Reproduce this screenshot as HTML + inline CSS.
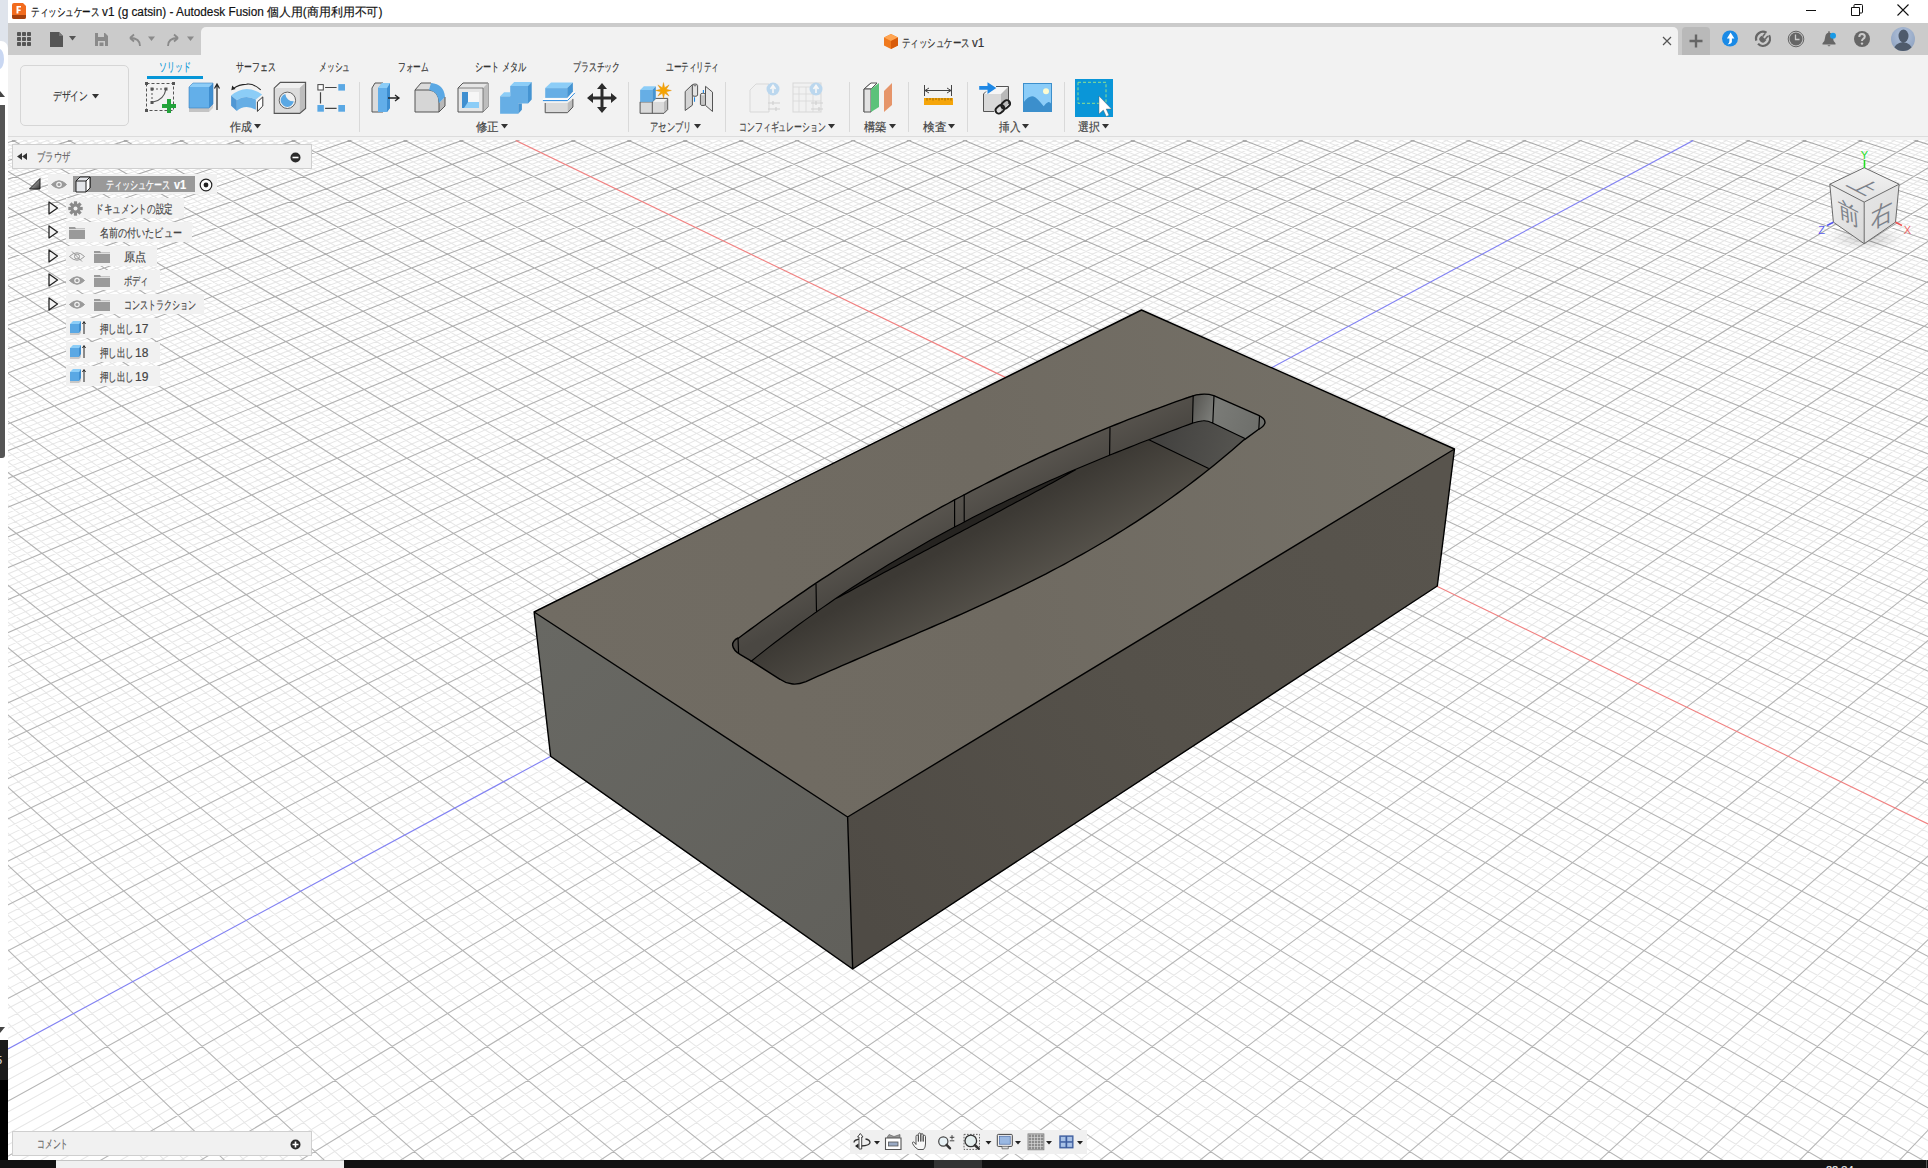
<!DOCTYPE html>
<html lang="ja">
<head>
<meta charset="utf-8">
<style>
*{margin:0;padding:0;box-sizing:border-box}
html,body{width:1928px;height:1168px;overflow:hidden;background:#fff;font-family:"Liberation Sans",sans-serif;color:#333}
.a{position:absolute}
svg{position:absolute;overflow:visible}
#title{left:8px;top:0;width:1920px;height:23px;background:#fff}
#tabbar{left:8px;top:23px;width:1920px;height:32px;background:#cbcbcb}
#ribbon{left:8px;top:55px;width:1920px;height:85px;background:#f2f2f2}
#view{left:8px;top:140px;width:1920px;height:1020px;background:#fff;overflow:hidden}
#strip{left:0;top:0;width:8px;height:1168px;background:#fff}
#task{left:0;top:1160px;width:1928px;height:8px;background:#111}
.t{position:absolute;white-space:nowrap;line-height:1;-webkit-text-stroke:0.18px currentColor}
</style>
</head>
<body>
<div id="view" class="a">
<svg width="1920" height="1020" style="left:0;top:0">
<defs><linearGradient id="gMaj" x1="0" y1="0" x2="0" y2="1020" gradientUnits="userSpaceOnUse"><stop offset="0" stop-color="#aaaaaa"/><stop offset="0.3" stop-color="#b2b2b2"/><stop offset="1" stop-color="#b6b6b6"/></linearGradient></defs><path d="M3.0 -2.0L-2.0 -0.4M25.4 -2.0L-2.0 6.7M36.5 -2.0L-2.0 10.3M47.7 -2.0L-2.0 13.9M58.9 -2.0L-2.0 17.5M81.2 -2.0L-2.0 24.9M92.4 -2.0L-2.0 28.6M103.5 -2.0L-2.0 32.3M114.7 -2.0L-2.0 36.0M137.0 -2.0L-2.0 43.5M148.2 -2.0L-2.0 47.3M159.4 -2.0L-2.0 51.1M170.5 -2.0L-2.0 55.0M192.9 -2.0L-2.0 62.7M204.0 -2.0L-2.0 66.6M215.2 -2.0L-2.0 70.6M226.4 -2.0L-2.0 74.5M248.7 -2.0L-2.0 82.5M259.9 -2.0L-2.0 86.5M271.0 -2.0L-2.0 90.6M282.2 -2.0L-2.0 94.6M1911.3 -2.0L1922.0 1.4M304.5 -2.0L-2.0 102.8M1889.0 -2.0L1922.0 8.5M315.7 -2.0L-2.0 107.0M1877.8 -2.0L1922.0 12.1M326.9 -2.0L-2.0 111.1M1866.6 -2.0L1922.0 15.8M338.0 -2.0L-2.0 115.3M1855.4 -2.0L1922.0 19.4M360.4 -2.0L-2.0 123.8M1833.1 -2.0L1922.0 26.8M371.5 -2.0L-2.0 128.0M1821.9 -2.0L1922.0 30.5M382.7 -2.0L-2.0 132.3M1810.7 -2.0L1922.0 34.2M393.9 -2.0L-2.0 136.6M1799.6 -2.0L1922.0 37.9M416.2 -2.0L-2.0 145.4M1777.2 -2.0L1922.0 45.5M427.4 -2.0L-2.0 149.8M1766.1 -2.0L1922.0 49.3M438.5 -2.0L-2.0 154.2M1754.9 -2.0L1922.0 53.1M449.7 -2.0L-2.0 158.6M1743.7 -2.0L1922.0 57.0M472.0 -2.0L-2.0 167.6M1721.4 -2.0L1922.0 64.8M483.2 -2.0L-2.0 172.1M1710.2 -2.0L1922.0 68.7M494.4 -2.0L-2.0 176.7M1699.0 -2.0L1922.0 72.6M505.5 -2.0L-2.0 181.3M1687.8 -2.0L1922.0 76.6M527.9 -2.0L-2.0 190.6M1665.5 -2.0L1922.0 84.6M539.1 -2.0L-2.0 195.2M1654.3 -2.0L1922.0 88.6M550.2 -2.0L-2.0 199.9M1643.2 -2.0L1922.0 92.7M561.4 -2.0L-2.0 204.7M1632.0 -2.0L1922.0 96.8M583.7 -2.0L-2.0 214.2M1609.6 -2.0L1922.0 105.0M594.9 -2.0L-2.0 219.1M1598.5 -2.0L1922.0 109.2M606.1 -2.0L-2.0 223.9M1587.3 -2.0L1922.0 113.4M617.2 -2.0L-2.0 228.8M1576.1 -2.0L1922.0 117.6M639.6 -2.0L-2.0 238.7M1553.8 -2.0L1922.0 126.0M650.7 -2.0L-2.0 243.7M1542.6 -2.0L1922.0 130.3M661.9 -2.0L-2.0 248.7M1531.4 -2.0L1922.0 134.6M673.1 -2.0L-2.0 253.7M1520.3 -2.0L1922.0 139.0M695.4 -2.0L-2.0 263.9M1497.9 -2.0L1922.0 147.7M706.6 -2.0L-2.0 269.1M1486.8 -2.0L1922.0 152.1M717.7 -2.0L-2.0 274.3M1475.6 -2.0L1922.0 156.6M728.9 -2.0L-2.0 279.5M1464.4 -2.0L1922.0 161.0M751.2 -2.0L-2.0 290.0M1442.1 -2.0L1922.0 170.1M762.4 -2.0L-2.0 295.3M1430.9 -2.0L1922.0 174.6M773.6 -2.0L-2.0 300.7M1419.7 -2.0L1922.0 179.2M784.8 -2.0L-2.0 306.1M1408.6 -2.0L1922.0 183.8M807.1 -2.0L-2.0 317.0M1386.2 -2.0L1922.0 193.1M818.3 -2.0L-2.0 322.5M1375.0 -2.0L1922.0 197.8M829.4 -2.0L-2.0 328.0M1363.9 -2.0L1922.0 202.5M840.6 -2.0L-2.0 333.6M1352.7 -2.0L1922.0 207.3M862.9 -2.0L-2.0 344.9M1330.4 -2.0L1922.0 216.9M874.1 -2.0L-2.0 350.6M1319.2 -2.0L1922.0 221.7M885.3 -2.0L-2.0 356.3M1308.0 -2.0L1922.0 226.6M896.4 -2.0L-2.0 362.1M1296.8 -2.0L1922.0 231.5M918.8 -2.0L-2.0 373.8M1274.5 -2.0L1922.0 241.4M929.9 -2.0L-2.0 379.7M1263.3 -2.0L1922.0 246.4M941.1 -2.0L-2.0 385.6M1252.2 -2.0L1922.0 251.5M952.3 -2.0L-2.0 391.6M1241.0 -2.0L1922.0 256.5M974.6 -2.0L-2.0 403.7M1218.6 -2.0L1922.0 266.8M985.8 -2.0L-2.0 409.8M1207.5 -2.0L1922.0 272.0M997.0 -2.0L-2.0 416.0M1196.3 -2.0L1922.0 277.2M1008.1 -2.0L-2.0 422.2M1185.1 -2.0L1922.0 282.4M1030.5 -2.0L-2.0 434.7M1162.8 -2.0L1922.0 293.0M1041.6 -2.0L-2.0 441.1M1151.6 -2.0L1922.0 298.3M1052.8 -2.0L-2.0 447.5M1140.5 -2.0L1922.0 303.7M1064.0 -2.0L-2.0 453.9M1129.3 -2.0L1922.0 309.1M1086.3 -2.0L-2.0 466.9M1106.9 -2.0L1922.0 320.1M1097.5 -2.0L-2.0 473.5M1095.8 -2.0L1922.0 325.6M1108.7 -2.0L-2.0 480.1M1084.6 -2.0L1922.0 331.2M1119.8 -2.0L-2.0 486.8M1073.4 -2.0L1922.0 336.8M1142.2 -2.0L-2.0 500.3M1051.1 -2.0L1922.0 348.1M1153.3 -2.0L-2.0 507.1M1039.9 -2.0L1922.0 353.9M1164.5 -2.0L-2.0 514.0M1028.7 -2.0L1922.0 359.6M1175.7 -2.0L-2.0 521.0M1017.6 -2.0L1922.0 365.4M1198.0 -2.0L-2.0 535.0M995.2 -2.0L1922.0 377.2M1209.2 -2.0L-2.0 542.1M984.1 -2.0L1922.0 383.1M1220.4 -2.0L-2.0 549.2M972.9 -2.0L1922.0 389.1M1231.5 -2.0L-2.0 556.4M961.7 -2.0L1922.0 395.1M1253.9 -2.0L-2.0 571.0M939.4 -2.0L1922.0 407.2M1265.0 -2.0L-2.0 578.4M928.2 -2.0L1922.0 413.4M1276.2 -2.0L-2.0 585.8M917.0 -2.0L1922.0 419.6M1287.4 -2.0L-2.0 593.3M905.9 -2.0L1922.0 425.8M1309.7 -2.0L-2.0 608.5M883.5 -2.0L1922.0 438.4M1320.9 -2.0L-2.0 616.2M872.4 -2.0L1922.0 444.8M1332.1 -2.0L-2.0 623.9M861.2 -2.0L1922.0 451.2M1343.2 -2.0L-2.0 631.7M850.0 -2.0L1922.0 457.7M1365.6 -2.0L-2.0 647.5M827.7 -2.0L1922.0 470.7M1376.7 -2.0L-2.0 655.5M816.5 -2.0L1922.0 477.4M1387.9 -2.0L-2.0 663.6M805.4 -2.0L1922.0 484.0M1399.1 -2.0L-2.0 671.7M794.2 -2.0L1922.0 490.7M1421.4 -2.0L-2.0 688.2M771.8 -2.0L1922.0 504.3M1432.6 -2.0L-2.0 696.5M760.7 -2.0L1922.0 511.2M1443.8 -2.0L-2.0 704.9M749.5 -2.0L1922.0 518.1M1454.9 -2.0L-2.0 713.4M738.3 -2.0L1922.0 525.1M1477.3 -2.0L-2.0 730.6M716.0 -2.0L1922.0 539.2M1488.5 -2.0L-2.0 739.3M704.8 -2.0L1922.0 546.3M1499.6 -2.0L-2.0 748.1M693.7 -2.0L1922.0 553.5M1510.8 -2.0L-2.0 756.9M682.5 -2.0L1922.0 560.7M1533.1 -2.0L-2.0 774.8M660.2 -2.0L1922.0 575.4M1544.3 -2.0L-2.0 783.9M649.0 -2.0L1922.0 582.8M1555.5 -2.0L-2.0 793.1M637.8 -2.0L1922.0 590.3M1566.7 -2.0L-2.0 802.3M626.6 -2.0L1922.0 597.8M1589.0 -2.0L-2.0 821.1M604.3 -2.0L1922.0 613.1M1600.2 -2.0L-2.0 830.6M593.1 -2.0L1922.0 620.8M1611.3 -2.0L-2.0 840.1M582.0 -2.0L1922.0 628.6M1622.5 -2.0L-2.0 849.8M570.8 -2.0L1922.0 636.4M1644.8 -2.0L-2.0 869.4M548.5 -2.0L1922.0 652.3M1656.0 -2.0L-2.0 879.3M537.3 -2.0L1922.0 660.4M1667.2 -2.0L-2.0 889.3M526.1 -2.0L1922.0 668.5M1678.4 -2.0L-2.0 899.5M515.0 -2.0L1922.0 676.7M1700.7 -2.0L-2.0 920.0M492.6 -2.0L1922.0 693.2M1711.9 -2.0L-2.0 930.4M481.5 -2.0L1922.0 701.6M1723.1 -2.0L-2.0 940.9M470.3 -2.0L1922.0 710.1M1734.2 -2.0L-2.0 951.5M459.1 -2.0L1922.0 718.6M1756.6 -2.0L-2.0 973.0M436.8 -2.0L1922.0 735.9M1767.7 -2.0L-2.0 983.9M425.6 -2.0L1922.0 744.6M1778.9 -2.0L-2.0 994.9M414.4 -2.0L1922.0 753.4M1790.1 -2.0L-2.0 1006.0M403.3 -2.0L1922.0 762.3M1812.4 -2.0L9.6 1022.0M380.9 -2.0L1922.0 780.4M1823.6 -2.0L29.6 1022.0M369.8 -2.0L1922.0 789.5M1834.8 -2.0L49.6 1022.0M358.6 -2.0L1922.0 798.7M1845.9 -2.0L69.6 1022.0M347.4 -2.0L1922.0 808.0M1868.3 -2.0L109.6 1022.0M325.1 -2.0L1922.0 826.9M1879.5 -2.0L129.6 1022.0M313.9 -2.0L1922.0 836.4M1890.6 -2.0L149.6 1022.0M302.8 -2.0L1922.0 846.0M1901.8 -2.0L169.6 1022.0M291.6 -2.0L1922.0 855.8M1922.0 -0.7L209.6 1022.0M269.3 -2.0L1922.0 875.5M1922.0 6.0L229.6 1022.0M258.1 -2.0L1922.0 885.5M1922.0 12.8L249.6 1022.0M246.9 -2.0L1922.0 895.6M1922.0 19.6L269.6 1022.0M235.8 -2.0L1922.0 905.7M1922.0 33.6L309.6 1022.0M213.4 -2.0L1922.0 926.4M1922.0 40.6L329.6 1022.0M202.3 -2.0L1922.0 936.9M1922.0 47.8L349.6 1022.0M191.1 -2.0L1922.0 947.4M1922.0 55.0L369.6 1022.0M179.9 -2.0L1922.0 958.1M1922.0 69.7L409.6 1022.0M157.6 -2.0L1922.0 979.7M1922.0 77.2L429.6 1022.0M146.4 -2.0L1922.0 990.7M1922.0 84.7L449.6 1022.0M135.3 -2.0L1922.0 1001.8M1922.0 92.3L469.6 1022.0M124.1 -2.0L1922.0 1013.0M1922.0 107.9L509.6 1022.0M101.8 -2.0L1898.0 1022.0M1922.0 115.7L529.6 1022.0M90.6 -2.0L1878.0 1022.0M1922.0 123.7L549.6 1022.0M79.4 -2.0L1858.0 1022.0M1922.0 131.8L569.6 1022.0M68.2 -2.0L1838.0 1022.0M1922.0 148.2L609.6 1022.0M45.9 -2.0L1798.0 1022.0M1922.0 156.6L629.6 1022.0M34.7 -2.0L1778.0 1022.0M1922.0 165.0L649.6 1022.0M23.6 -2.0L1758.0 1022.0M1922.0 173.5L669.6 1022.0M12.4 -2.0L1738.0 1022.0M1922.0 190.9L709.6 1022.0M-2.0 2.7L1698.0 1022.0M1922.0 199.8L729.6 1022.0M-2.0 9.5L1678.0 1022.0M1922.0 208.7L749.6 1022.0M-2.0 16.3L1658.0 1022.0M1922.0 217.8L769.6 1022.0M-2.0 23.2L1638.0 1022.0M1922.0 236.3L809.6 1022.0M-2.0 37.2L1598.0 1022.0M1922.0 245.7L829.6 1022.0M-2.0 44.4L1578.0 1022.0M1922.0 255.2L849.6 1022.0M-2.0 51.6L1558.0 1022.0M1922.0 264.8L869.6 1022.0M-2.0 58.8L1538.0 1022.0M1922.0 284.5L909.6 1022.0M-2.0 73.6L1498.0 1022.0M1922.0 294.5L929.6 1022.0M-2.0 81.1L1478.0 1022.0M1922.0 304.6L949.6 1022.0M-2.0 88.7L1458.0 1022.0M1922.0 314.9L969.6 1022.0M-2.0 96.4L1438.0 1022.0M1922.0 335.8L1009.6 1022.0M-2.0 112.0L1398.0 1022.0M1922.0 346.4L1029.6 1022.0M-2.0 120.0L1378.0 1022.0M1922.0 357.2L1049.6 1022.0M-2.0 128.0L1358.0 1022.0M1922.0 368.2L1069.6 1022.0M-2.0 136.1L1338.0 1022.0M1922.0 390.5L1109.7 1022.0M-2.0 152.6L1298.0 1022.0M1922.0 401.9L1129.7 1022.0M-2.0 161.0L1278.0 1022.0M1922.0 413.5L1149.7 1022.0M-2.0 169.6L1258.0 1022.0M1922.0 425.2L1169.7 1022.0M-2.0 178.2L1238.0 1022.0M1922.0 449.1L1209.7 1022.0M-2.0 195.7L1198.0 1022.0M1922.0 461.3L1229.7 1022.0M-2.0 204.6L1178.0 1022.0M1922.0 473.6L1249.7 1022.0M-2.0 213.6L1158.0 1022.0M1922.0 486.2L1269.7 1022.0M-2.0 222.7L1138.0 1022.0M1922.0 511.8L1309.7 1022.0M-2.0 241.3L1098.0 1022.0M1922.0 524.9L1329.7 1022.0M-2.0 250.8L1078.0 1022.0M1922.0 538.2L1349.7 1022.0M-2.0 260.4L1058.1 1022.0M1922.0 551.7L1369.7 1022.0M-2.0 270.1L1038.1 1022.0M1922.0 579.3L1409.7 1022.0M-2.0 289.9L998.1 1022.0M1922.0 593.4L1429.7 1022.0M-2.0 300.0L978.1 1022.0M1922.0 607.7L1449.7 1022.0M-2.0 310.2L958.1 1022.0M1922.0 622.2L1469.7 1022.0M-2.0 320.5L938.1 1022.0M1922.0 651.9L1509.7 1022.0M-2.0 341.6L898.1 1022.0M1922.0 667.1L1529.7 1022.0M-2.0 352.4L878.1 1022.0M1922.0 682.6L1549.7 1022.0M-2.0 363.3L858.1 1022.0M1922.0 698.3L1569.7 1022.0M-2.0 374.3L838.1 1022.0M1922.0 730.4L1609.8 1022.0M-2.0 396.8L798.1 1022.0M1922.0 746.9L1629.8 1022.0M-2.0 408.3L778.1 1022.0M1922.0 763.6L1649.8 1022.0M-2.0 419.9L758.1 1022.0M1922.0 780.6L1669.8 1022.0M-2.0 431.8L738.1 1022.0M1922.0 815.5L1709.8 1022.0M-2.0 455.9L698.1 1022.0M1922.0 833.4L1729.8 1022.0M-2.0 468.2L678.1 1022.0M1922.0 851.6L1749.8 1022.0M-2.0 480.6L658.1 1022.0M1922.0 870.1L1769.8 1022.0M-2.0 493.3L638.1 1022.0M1922.0 908.1L1809.8 1022.0M-2.0 519.2L598.2 1022.0M1922.0 927.6L1829.8 1022.0M-2.0 532.4L578.2 1022.0M1922.0 947.4L1849.8 1022.0M-2.0 545.8L558.2 1022.0M1922.0 967.6L1869.8 1022.0M-2.0 559.4L538.2 1022.0M1922.0 1009.1L1909.8 1022.0M-2.0 587.2L498.2 1022.0M-2.0 601.5L478.2 1022.0M-2.0 615.9L458.2 1022.0M-2.0 630.6L438.2 1022.0M-2.0 660.6L398.2 1022.0M-2.0 675.9L378.2 1022.0M-2.0 691.5L358.2 1022.0M-2.0 707.4L338.2 1022.0M-2.0 739.9L298.2 1022.0M-2.0 756.5L278.2 1022.0M-2.0 773.4L258.2 1022.0M-2.0 790.6L238.3 1022.0M-2.0 825.9L198.3 1022.0M-2.0 843.9L178.3 1022.0M-2.0 862.3L158.3 1022.0M-2.0 881.0L138.3 1022.0" stroke="#e7e7e7" stroke-width="1.05" fill="none"/><path d="M14.2 -2.0L-2.0 3.1M70.0 -2.0L-2.0 21.2M125.9 -2.0L-2.0 39.8M181.7 -2.0L-2.0 58.8M237.5 -2.0L-2.0 78.5M293.4 -2.0L-2.0 98.7M1900.1 -2.0L1922.0 5.0M349.2 -2.0L-2.0 119.5M1844.3 -2.0L1922.0 23.1M405.0 -2.0L-2.0 141.0M1788.4 -2.0L1922.0 41.7M460.9 -2.0L-2.0 163.1M1732.5 -2.0L1922.0 60.9M516.7 -2.0L-2.0 185.9M1676.7 -2.0L1922.0 80.6M572.6 -2.0L-2.0 209.4M1620.8 -2.0L1922.0 100.9M628.4 -2.0L-2.0 233.7M1565.0 -2.0L1922.0 121.8M684.2 -2.0L-2.0 258.8M1509.1 -2.0L1922.0 143.3M740.1 -2.0L-2.0 284.7M1453.2 -2.0L1922.0 165.5M795.9 -2.0L-2.0 311.5M1397.4 -2.0L1922.0 188.4M851.8 -2.0L-2.0 339.2M1341.5 -2.0L1922.0 212.1M907.6 -2.0L-2.0 367.9M1285.7 -2.0L1922.0 236.5M963.5 -2.0L-2.0 397.7M1229.8 -2.0L1922.0 261.7M1019.3 -2.0L-2.0 428.5M1174.0 -2.0L1922.0 287.7M1075.2 -2.0L-2.0 460.4M1118.1 -2.0L1922.0 314.6M1131.0 -2.0L-2.0 493.5M1062.3 -2.0L1922.0 342.5M1186.8 -2.0L-2.0 527.9M1006.4 -2.0L1922.0 371.3M1242.7 -2.0L-2.0 563.7M950.6 -2.0L1922.0 401.1M1298.6 -2.0L-2.0 600.9M894.7 -2.0L1922.0 432.1M1354.4 -2.0L-2.0 639.6M838.9 -2.0L1922.0 464.2M1410.3 -2.0L-2.0 679.9M783.0 -2.0L1922.0 497.5M1466.1 -2.0L-2.0 722.0M727.2 -2.0L1922.0 532.1M1522.0 -2.0L-2.0 765.8M671.3 -2.0L1922.0 568.0M1577.8 -2.0L-2.0 811.7M615.5 -2.0L1922.0 605.4M1633.7 -2.0L-2.0 859.5M559.6 -2.0L1922.0 644.4M1745.4 -2.0L-2.0 962.2M447.9 -2.0L1922.0 727.2M1801.3 -2.0L-2.0 1017.2M392.1 -2.0L1922.0 771.3M1857.1 -2.0L89.6 1022.0M336.3 -2.0L1922.0 817.4M1913.0 -2.0L189.6 1022.0M280.4 -2.0L1922.0 865.6M1922.0 26.6L289.6 1022.0M224.6 -2.0L1922.0 916.0M1922.0 62.3L389.6 1022.0M168.8 -2.0L1922.0 968.9M1922.0 100.1L489.6 1022.0M112.9 -2.0L1918.0 1022.0M1922.0 140.0L589.6 1022.0M57.1 -2.0L1818.0 1022.0M1922.0 182.2L689.6 1022.0M1.2 -2.0L1718.0 1022.0M1922.0 227.0L789.6 1022.0M-2.0 30.2L1618.0 1022.0M1922.0 274.6L889.6 1022.0M-2.0 66.2L1518.0 1022.0M1922.0 325.2L989.6 1022.0M-2.0 104.2L1418.0 1022.0M1922.0 379.3L1089.7 1022.0M-2.0 144.3L1318.0 1022.0M1922.0 437.0L1189.7 1022.0M-2.0 186.9L1218.0 1022.0M1922.0 498.9L1289.7 1022.0M-2.0 232.0L1118.0 1022.0M1922.0 565.4L1389.7 1022.0M-2.0 279.9L1018.1 1022.0M1922.0 636.9L1489.7 1022.0M-2.0 331.0L918.1 1022.0M1922.0 714.2L1589.8 1022.0M-2.0 385.5L818.1 1022.0M1922.0 797.9L1689.8 1022.0M-2.0 443.7L718.1 1022.0M1922.0 888.9L1789.8 1022.0M-2.0 506.1L618.1 1022.0M1922.0 988.1L1889.8 1022.0M-2.0 573.2L518.2 1022.0M-2.0 645.5L418.2 1022.0M-2.0 723.5L318.2 1022.0M-2.0 808.1L218.3 1022.0" stroke="url(#gMaj)" stroke-width="1.1" fill="none"/>
<g transform="translate(-8,-140)">
<path d="M515.7 140.4L1928 823.9" stroke="#f08282" stroke-width="1.15" fill="none"/>
<path d="M1693.2 140.4L8 1048.9" stroke="#8282f2" stroke-width="1.15" fill="none"/>
<defs>
<linearGradient id="gTop" x1="534" y1="612" x2="1455" y2="449" gradientUnits="userSpaceOnUse"><stop offset="0" stop-color="#716c63"/><stop offset="0.5" stop-color="#6f6a61"/><stop offset="1" stop-color="#757168"/></linearGradient>
<linearGradient id="gLeft" x1="540" y1="620" x2="850" y2="960" gradientUnits="userSpaceOnUse"><stop offset="0" stop-color="#686863"/><stop offset="1" stop-color="#61605b"/></linearGradient>
<linearGradient id="gRight" x1="850" y1="900" x2="1450" y2="520" gradientUnits="userSpaceOnUse"><stop offset="0" stop-color="#4f4b45"/><stop offset="0.5" stop-color="#55514a"/><stop offset="1" stop-color="#58544d"/></linearGradient>
<linearGradient id="gFloor" x1="960" y1="540" x2="1010" y2="630" gradientUnits="userSpaceOnUse"><stop offset="0" stop-color="#3c3934"/><stop offset="1" stop-color="#5f5b53"/></linearGradient>
<linearGradient id="gWall" x1="900" y1="520" x2="920" y2="560" gradientUnits="userSpaceOnUse"><stop offset="0" stop-color="#5a5650"/><stop offset="1" stop-color="#4a4742"/></linearGradient>
<linearGradient id="gFlat" x1="1160" y1="440" x2="1230" y2="460" gradientUnits="userSpaceOnUse"><stop offset="0" stop-color="#434240"/><stop offset="1" stop-color="#54534f"/></linearGradient>
<linearGradient id="gEnd" x1="1193" y1="400" x2="1265" y2="430" gradientUnits="userSpaceOnUse"><stop offset="0" stop-color="#585753"/><stop offset="0.3" stop-color="#7a7b77"/><stop offset="1" stop-color="#6c6d69"/></linearGradient>
</defs>
<path d="M1141.5 310L1454.5 449L847.6 817L534.1 612Z" fill="url(#gTop)"/>
<path d="M534.1 612L847.6 817L852.7 969L550.6 756.2Z" fill="url(#gLeft)"/>
<path d="M847.6 817L1454.5 449L1437.3 586L852.7 969Z" fill="url(#gRight)"/>
<path d="M1141.5 310L1454.5 449L1437.3 586L852.7 969L550.6 756.2L534.1 612Z M534.1 612L847.6 817L1454.5 449 M847.6 817L852.7 969" stroke="#000" stroke-width="1.4" fill="none" stroke-linejoin="round"/>
<path d="M738.0 638.5L744.0 634.0L750.0 629.6L756.0 625.2L762.0 620.8L768.0 616.5L774.0 612.2L780.0 607.9L786.0 603.7L792.0 599.6L798.0 595.4L804.0 591.3L810.0 587.2L816.0 583.2L822.0 579.2L828.0 575.3L834.0 571.3L840.0 567.5L846.0 563.6L852.0 559.8L858.0 556.0L864.0 552.3L870.0 548.6L876.0 544.9L882.0 541.3L888.0 537.6L894.0 534.1L900.0 530.5L906.0 527.0L912.0 523.6L918.0 520.1L924.0 516.7L930.0 513.4L936.0 510.0L942.0 506.7L948.0 503.5L954.0 500.2L960.0 497.0L966.0 493.9L972.0 490.7L978.0 487.6L984.0 484.5L990.0 481.5L996.0 478.5L1002.0 475.5L1008.0 472.5L1014.0 469.6L1020.0 466.7L1026.0 463.9L1032.0 461.0L1038.0 458.2L1044.0 455.5L1050.0 452.7L1056.0 450.0L1062.0 447.3L1068.0 444.7L1074.0 442.1L1080.0 439.5L1086.0 436.9L1092.0 434.4L1098.0 431.9L1104.0 429.4L1110.0 426.9L1116.0 424.5L1122.0 422.1L1128.0 419.7L1134.0 417.4L1140.0 415.1L1146.0 412.8L1152.0 410.5L1158.0 408.3L1164.0 406.1L1170.0 403.9L1176.0 401.7L1182.0 399.6L1188.0 397.5C1199 393.2 1206 393.2 1213.8 395.6L1258.7 415.4C1262 417 1265.5 419.5 1264.9 423.1C1264 426 1261 428 1258.7 429.3L1244.9 439.4L1244.0 439.8L1238.0 445.1L1232.0 450.3L1226.0 455.3L1220.0 460.3L1214.0 465.2L1208.0 470.0L1202.0 474.8L1196.0 479.4L1190.0 484.0L1184.0 488.5L1178.0 492.9L1172.0 497.3L1166.0 501.5L1160.0 505.7L1154.0 509.8L1148.0 513.9L1142.0 517.9L1136.0 521.8L1130.0 525.7L1124.0 529.5L1118.0 533.2L1112.0 536.9L1106.0 540.5L1100.0 544.0L1094.0 547.5L1088.0 551.0L1082.0 554.4L1076.0 557.7L1070.0 561.0L1064.0 564.3L1058.0 567.5L1052.0 570.6L1046.0 573.8L1040.0 576.8L1034.0 579.9L1028.0 582.9L1022.0 585.8L1016.0 588.8L1010.0 591.7L1004.0 594.5L998.0 597.4L992.0 600.2L986.0 602.9L980.0 605.7L974.0 608.4L968.0 611.1L962.0 613.8L956.0 616.5L950.0 619.1L944.0 621.8L938.0 624.4L932.0 627.0L926.0 629.6L920.0 632.2L914.0 634.8L908.0 637.3L902.0 639.9L896.0 642.5L890.0 645.0L884.0 647.6L878.0 650.2L872.0 652.7L866.0 655.3L860.0 657.9L854.0 660.5L848.0 663.1L842.0 665.7L836.0 668.3L830.0 670.9L824.0 673.6L818.0 676.2L812.0 678.9L806.0 681.6C801 683.5 795 684.5 791.4 683.8C786 683 783 681.5 780 679.3L750.6 660.7L740.4 654.7C736 652 733 649 732.6 645.1C732.6 641.5 735 639.5 738 638Z" fill="url(#gFloor)"/>
<path d="M738.0 638.5L744.0 634.0L750.0 629.6L756.0 625.2L762.0 620.8L768.0 616.5L774.0 612.2L780.0 607.9L786.0 603.7L792.0 599.6L798.0 595.4L804.0 591.3L810.0 587.2L816.0 583.2L822.0 579.2L828.0 575.3L834.0 571.3L840.0 567.5L846.0 563.6L852.0 559.8L858.0 556.0L864.0 552.3L870.0 548.6L876.0 544.9L882.0 541.3L888.0 537.6L894.0 534.1L900.0 530.5L906.0 527.0L912.0 523.6L918.0 520.1L924.0 516.7L930.0 513.4L936.0 510.0L942.0 506.7L948.0 503.5L954.0 500.2L960.0 497.0L966.0 493.9L972.0 490.7L978.0 487.6L984.0 484.5L990.0 481.5L996.0 478.5L1002.0 475.5L1008.0 472.5L1014.0 469.6L1020.0 466.7L1026.0 463.9L1032.0 461.0L1038.0 458.2L1044.0 455.5L1050.0 452.7L1056.0 450.0L1062.0 447.3L1068.0 444.7L1074.0 442.1L1080.0 439.5L1086.0 436.9L1092.0 434.4L1098.0 431.9L1104.0 429.4L1110.0 426.9L1116.0 424.5L1122.0 422.1L1128.0 419.7L1134.0 417.4L1140.0 415.1L1146.0 412.8L1152.0 410.5L1158.0 408.3L1164.0 406.1L1170.0 403.9L1176.0 401.7L1182.0 399.6L1188.0 397.5C1199 393.2 1206 393.2 1213.8 395.6L1258.7 415.4C1262 417 1265.5 419.5 1264.9 423.1C1264 426 1261 428 1258.7 429.3L1244.9 439.4L1244.9 438.5L1212.5 423.1C1209 421.3 1206 420.6 1203.3 420.8C1199 421 1196 422 1192.5 423.1L1188.6 424.6L1182.6 426.8L1176.6 429.1L1170.6 431.3L1164.6 433.6L1158.6 435.9L1152.6 438.2L1146.6 440.5L1140.6 442.8L1134.6 445.2L1128.6 447.6L1122.6 450.0L1116.6 452.4L1110.6 454.8L1104.6 457.2L1098.6 459.7L1092.6 462.2L1086.6 464.7L1080.6 467.3L1074.6 469.8L1068.6 472.4L1062.6 475.0L1056.6 477.7L1050.6 480.3L1044.6 483.0L1038.6 485.7L1032.6 488.5L1026.6 491.2L1020.6 494.0L1014.6 496.9L1008.6 499.8L1002.6 502.7L996.6 505.6L990.6 508.5L984.6 511.5L978.6 514.6L972.6 517.6L966.6 520.7L960.6 523.9L954.6 527.1L948.6 530.3L942.6 533.5L936.6 536.8L930.6 540.1L924.6 543.5L918.6 546.9L912.6 550.4L906.6 553.9L900.6 557.4L894.6 561.0L888.6 564.6L882.6 568.3L876.6 572.0L870.6 575.8L864.6 579.6L858.6 583.4L852.6 587.3L846.6 591.3L840.6 595.3L834.6 599.3L828.6 603.5L822.6 607.6L816.6 611.8L810.6 616.1L804.6 620.4L798.6 624.8L792.6 629.2L786.6 633.7L780.6 638.2L774.6 642.8L768.6 647.4L762.6 652.1L756.6 656.9L750.6 661.7L750.6 660.7L740.4 654.7C736 652 733 649 732.6 645.1C732.6 641.5 735 639.5 738 638Z" fill="url(#gWall)"/>
<path d="M1193 395.8C1199 393.2 1206 393.2 1213.8 395.6L1258.7 415.4C1262 417 1265.5 419.5 1264.9 423.1C1264 426 1261 428 1258.7 429.3L1244.9 439.4L1244.9 438.5L1212.5 423.1C1209 421.3 1206 420.6 1203.3 420.8C1199 421 1196 422 1192.5 423.1Z" fill="url(#gEnd)"/>
<path d="M1149.4 440.1L1192.5 423.1C1196 422 1199 421 1203.3 420.8C1206 420.6 1209 421.3 1212.5 423.1L1244.9 438.5L1244.9 439.4L1208.7 468.6Z" fill="url(#gFlat)"/>
<path d="M836.0 598.4L840.0 595.7L844.0 593.0L848.0 590.4L852.0 587.7L856.0 585.1L860.0 582.5L864.0 580.0L868.0 577.4L872.0 574.9L876.0 572.4L880.0 569.9L884.0 567.4L888.0 565.0L892.0 562.6L896.0 560.2L900.0 557.8L904.0 555.4L908.0 553.1L912.0 550.7L916.0 548.4L920.0 546.1L924.0 543.9L928.0 541.6L932.0 539.4L936.0 537.1L940.0 534.9L944.0 532.8L948.0 530.6L952.0 528.4L956.0 526.3L960.0 524.2L964.0 522.1L968.0 520.0L972.0 518.0L976.0 515.9L980.0 513.9L984.0 511.8L988.0 509.8L992.0 507.9L996.0 505.9L1000.0 503.9L1004.0 502.0L1008.0 500.0L1012.0 498.1L1016.0 496.2L1020.0 494.3L1024.0 492.5L1028.0 490.6L1032.0 488.7L1036.0 486.9L1040.0 485.1L1044.0 483.3L1048.0 481.5L1052.0 479.7L1056.0 477.9L1060.0 476.2L1064.0 474.4L1068.0 472.7L1072.0 470.9L1076.0 469.2L1076.0 469.5L1072.0 471.8L1068.0 474.1L1064.0 476.3L1060.0 478.5L1056.0 480.7L1052.0 482.9L1048.0 485.1L1044.0 487.2L1040.0 489.4L1036.0 491.6L1032.0 493.7L1028.0 495.9L1024.0 498.0L1020.0 500.2L1016.0 502.3L1012.0 504.5L1008.0 506.6L1004.0 508.8L1000.0 510.9L996.0 513.0L992.0 515.2L988.0 517.3L984.0 519.4L980.0 521.6L976.0 523.7L972.0 525.8L968.0 527.9L964.0 530.1L960.0 532.2L956.0 534.3L952.0 536.4L948.0 538.6L944.0 540.7L940.0 542.8L936.0 544.9L932.0 547.0L928.0 549.2L924.0 551.3L920.0 553.4L916.0 555.5L912.0 557.7L908.0 559.8L904.0 561.9L900.0 564.1L896.0 566.2L892.0 568.3L888.0 570.5L884.0 572.6L880.0 574.8L876.0 577.0L872.0 579.1L868.0 581.3L864.0 583.5L860.0 585.6L856.0 587.8L852.0 590.0L848.0 592.2L844.0 594.3L840.0 596.5L836.0 598.4Z" fill="#262421"/>
<path d="M738.0 638.5L744.0 634.0L750.0 629.6L756.0 625.2L762.0 620.8L768.0 616.5L774.0 612.2L780.0 607.9L786.0 603.7L792.0 599.6L798.0 595.4L804.0 591.3L810.0 587.2L816.0 583.2L822.0 579.2L828.0 575.3L834.0 571.3L840.0 567.5L846.0 563.6L852.0 559.8L858.0 556.0L864.0 552.3L870.0 548.6L876.0 544.9L882.0 541.3L888.0 537.6L894.0 534.1L900.0 530.5L906.0 527.0L912.0 523.6L918.0 520.1L924.0 516.7L930.0 513.4L936.0 510.0L942.0 506.7L948.0 503.5L954.0 500.2L960.0 497.0L966.0 493.9L972.0 490.7L978.0 487.6L984.0 484.5L990.0 481.5L996.0 478.5L1002.0 475.5L1008.0 472.5L1014.0 469.6L1020.0 466.7L1026.0 463.9L1032.0 461.0L1038.0 458.2L1044.0 455.5L1050.0 452.7L1056.0 450.0L1062.0 447.3L1068.0 444.7L1074.0 442.1L1080.0 439.5L1086.0 436.9L1092.0 434.4L1098.0 431.9L1104.0 429.4L1110.0 426.9L1116.0 424.5L1122.0 422.1L1128.0 419.7L1134.0 417.4L1140.0 415.1L1146.0 412.8L1152.0 410.5L1158.0 408.3L1164.0 406.1L1170.0 403.9L1176.0 401.7L1182.0 399.6L1188.0 397.5C1199 393.2 1206 393.2 1213.8 395.6L1258.7 415.4C1262 417 1265.5 419.5 1264.9 423.1C1264 426 1261 428 1258.7 429.3L1244.9 439.4L1244.0 439.8L1238.0 445.1L1232.0 450.3L1226.0 455.3L1220.0 460.3L1214.0 465.2L1208.0 470.0L1202.0 474.8L1196.0 479.4L1190.0 484.0L1184.0 488.5L1178.0 492.9L1172.0 497.3L1166.0 501.5L1160.0 505.7L1154.0 509.8L1148.0 513.9L1142.0 517.9L1136.0 521.8L1130.0 525.7L1124.0 529.5L1118.0 533.2L1112.0 536.9L1106.0 540.5L1100.0 544.0L1094.0 547.5L1088.0 551.0L1082.0 554.4L1076.0 557.7L1070.0 561.0L1064.0 564.3L1058.0 567.5L1052.0 570.6L1046.0 573.8L1040.0 576.8L1034.0 579.9L1028.0 582.9L1022.0 585.8L1016.0 588.8L1010.0 591.7L1004.0 594.5L998.0 597.4L992.0 600.2L986.0 602.9L980.0 605.7L974.0 608.4L968.0 611.1L962.0 613.8L956.0 616.5L950.0 619.1L944.0 621.8L938.0 624.4L932.0 627.0L926.0 629.6L920.0 632.2L914.0 634.8L908.0 637.3L902.0 639.9L896.0 642.5L890.0 645.0L884.0 647.6L878.0 650.2L872.0 652.7L866.0 655.3L860.0 657.9L854.0 660.5L848.0 663.1L842.0 665.7L836.0 668.3L830.0 670.9L824.0 673.6L818.0 676.2L812.0 678.9L806.0 681.6C801 683.5 795 684.5 791.4 683.8C786 683 783 681.5 780 679.3L750.6 660.7L740.4 654.7C736 652 733 649 732.6 645.1C732.6 641.5 735 639.5 738 638Z" fill="none" stroke="#000" stroke-width="1.4" stroke-linejoin="round"/>
<path d="M750.6 661.7L756.6 656.9L762.6 652.1L768.6 647.4L774.6 642.8L780.6 638.2L786.6 633.7L792.6 629.2L798.6 624.8L804.6 620.4L810.6 616.1L816.6 611.8L822.6 607.6L828.6 603.5L834.6 599.3L840.6 595.3L846.6 591.3L852.6 587.3L858.6 583.4L864.6 579.6L870.6 575.8L876.6 572.0L882.6 568.3L888.6 564.6L894.6 561.0L900.6 557.4L906.6 553.9L912.6 550.4L918.6 546.9L924.6 543.5L930.6 540.1L936.6 536.8L942.6 533.5L948.6 530.3L954.6 527.1L960.6 523.9L966.6 520.7L972.6 517.6L978.6 514.6L984.6 511.5L990.6 508.5L996.6 505.6L1002.6 502.7L1008.6 499.8L1014.6 496.9L1020.6 494.0L1026.6 491.2L1032.6 488.5L1038.6 485.7L1044.6 483.0L1050.6 480.3L1056.6 477.7L1062.6 475.0L1068.6 472.4L1074.6 469.8L1080.6 467.3L1086.6 464.7L1092.6 462.2L1098.6 459.7L1104.6 457.2L1110.6 454.8L1116.6 452.4L1122.6 450.0L1128.6 447.6L1134.6 445.2L1140.6 442.8L1146.6 440.5L1152.6 438.2L1158.6 435.9L1164.6 433.6L1170.6 431.3L1176.6 429.1L1182.6 426.8L1188.6 424.6L1192.5 423.1C1196 422 1199 421 1203.3 420.8C1206 420.6 1209 421.3 1212.5 423.1L1244.9 438.5 M836.0 598.4L840.0 596.5L844.0 594.3L848.0 592.2L852.0 590.0L856.0 587.8L860.0 585.6L864.0 583.5L868.0 581.3L872.0 579.1L876.0 577.0L880.0 574.8L884.0 572.6L888.0 570.5L892.0 568.3L896.0 566.2L900.0 564.1L904.0 561.9L908.0 559.8L912.0 557.7L916.0 555.5L920.0 553.4L924.0 551.3L928.0 549.2L932.0 547.0L936.0 544.9L940.0 542.8L944.0 540.7L948.0 538.6L952.0 536.4L956.0 534.3L960.0 532.2L964.0 530.1L968.0 527.9L972.0 525.8L976.0 523.7L980.0 521.6L984.0 519.4L988.0 517.3L992.0 515.2L996.0 513.0L1000.0 510.9L1004.0 508.8L1008.0 506.6L1012.0 504.5L1016.0 502.3L1020.0 500.2L1024.0 498.0L1028.0 495.9L1032.0 493.7L1036.0 491.6L1040.0 489.4L1044.0 487.2L1048.0 485.1L1052.0 482.9L1056.0 480.7L1060.0 478.5L1064.0 476.3L1068.0 474.1L1072.0 471.8L1076.0 469.5 M1149.4 440.1L1208.7 468.6 M738 638L738.6 653.5 M816 584L816.5 612.5 M954.6 499.3L954.6 527 M964.2 494.3L964.2 521.6 M1110 427.6L1109.6 454.7 M1193.2 395L1192.5 422.5 M1214 395.9L1212.8 422.8 M1259.5 416L1258.8 429.5" fill="none" stroke="#000" stroke-width="1.15" stroke-linejoin="round"/>
</g>
</svg>
</div>
<div id="title" class="a">
<svg width="16" height="17" style="left:3px;top:3px" viewBox="0 0 16 17"><path d="M1 2Q1 0 3 0H12L15 3V14Q15 16 13 16H3Q1 16 1 14Z" fill="#f26b1d"/><path d="M1 12H15V14Q15 16 13 16H3Q1 16 1 14Z" fill="#a5400c"/><path d="M5.5 3H10V4.6H7.4V6.4H9.6V8H7.4V10.5H5.5Z" fill="#fff"/></svg>
<div class="t" style="left:23.0px;top:5.5px;font-size:12.0px;font-weight:400;color:#111;transform:scaleX(0.715);transform-origin:0 0">ティッシュケース</div><div class="t" style="left:93.7px;top:6.2px;font-size:12.5px;font-weight:400;color:#111;transform:scaleX(0.943);transform-origin:0 0">v1 (g catsin) - Autodesk Fusion</div><div class="t" style="left:258.6px;top:5.5px;font-size:12.0px;font-weight:400;color:#111;transform:scaleX(0.995);transform-origin:0 0">個人用(商用利用不可)</div>
<svg width="12" height="12" style="left:1797px;top:4px"><path d="M1 6.5H11" stroke="#111" stroke-width="1"/></svg>
<svg width="12" height="12" style="left:1843px;top:4px"><path d="M0.5 3.5H8.5V11.5H0.5Z M3 3.5V1.5Q3 0.5 4 0.5H10.5Q11.5 0.5 11.5 1.5V8Q11.5 9 10.5 9H8.5" stroke="#111" stroke-width="1" fill="none"/></svg>
<svg width="12" height="12" style="left:1889px;top:4px"><path d="M0.5 0.5L11.5 11.5M11.5 0.5L0.5 11.5" stroke="#111" stroke-width="1.1"/></svg>
</div>
<div id="tabbar" class="a">
<svg width="200" height="32" style="left:0;top:0">
<g fill="#555"><rect x="9" y="9" width="4" height="4" rx=".8"/><rect x="14" y="9" width="4" height="4" rx=".8"/><rect x="19" y="9" width="4" height="4" rx=".8"/><rect x="9" y="14" width="4" height="4" rx=".8"/><rect x="14" y="14" width="4" height="4" rx=".8"/><rect x="19" y="14" width="4" height="4" rx=".8"/><rect x="9" y="19" width="4" height="4" rx=".8"/><rect x="14" y="19" width="4" height="4" rx=".8"/><rect x="19" y="19" width="4" height="4" rx=".8"/></g>
<path d="M42 9H51L55 13V24H42Z" fill="#555"/><path d="M51 9V13H55" fill="#777"/><path d="M61 13H68L64.5 17.5Z" fill="#555"/>
<path d="M87 10H97L100 13V23H87Z" fill="#8a8a8a"/><rect x="90" y="10" width="6" height="4" fill="#cbcbcb"/><rect x="90" y="18" width="7" height="5" fill="#cbcbcb"/><rect x="91.5" y="19.5" width="4" height="3.5" fill="#8a8a8a"/>
<path d="M132 23C132 17 128 15 122 15M122 15L126 11.5M122 15L126 18.5" stroke="#8a8a8a" stroke-width="1.8" fill="none"/><path d="M140 13.5H147L143.5 18Z" fill="#8a8a8a"/>
<path d="M160 23C160 17 164 15 170 15M170 15L166 11.5M170 15L166 18.5" stroke="#8a8a8a" stroke-width="1.8" fill="none"/><path d="M179 13.5H186L182.5 18Z" fill="#8a8a8a"/>
</svg>
<div class="a" style="left:193px;top:4px;width:1477px;height:28px;background:#f2f2f2;border-radius:5px 5px 0 0"></div>
<svg width="16" height="17" style="left:875px;top:10px" viewBox="0 0 16 17"><path d="M8 1L15 4.5V12.5L8 16L1 12.5V4.5Z" fill="#f07a1e"/><path d="M8 1L15 4.5L8 8L1 4.5Z" fill="#ffa552"/><path d="M8 8L15 4.5V12.5L8 16Z" fill="#d85c0c"/></svg>
<div class="t" style="left:893.7px;top:14.0px;font-size:12.0px;font-weight:400;color:#333;transform:scaleX(0.705);transform-origin:0 0">ティッシュケース</div><div class="t" style="left:964.0px;top:14.0px;font-size:12.0px;font-weight:400;color:#333;transform:scaleX(0.977);transform-origin:0 0">v1</div>
<svg width="10" height="10" style="left:1654px;top:13px"><path d="M1 1L9 9M9 1L1 9" stroke="#555" stroke-width="1.2"/></svg>
<div class="a" style="left:1674px;top:4px;width:28px;height:28px;background:#b9b9b9;border-radius:4px 4px 0 0"></div>
<svg width="14" height="14" style="left:1681px;top:11px"><path d="M7 0.5V13.5M0.5 7H13.5" stroke="#666" stroke-width="2.4"/></svg>
<svg width="20" height="20" style="left:1712px;top:6px"><circle cx="10" cy="9.5" r="8" fill="#1a8ae6"/><path d="M10.6 3.5L14.4 9.6H11.9V12.8Q11.6 14.8 7.6 15.4Q9.6 13.6 9.4 12V9.6H6.9Z" fill="#fff"/></svg>
<svg width="20" height="20" style="left:1745px;top:6px"><path d="M3.24 11.61A7 7 0 0 1 13.5 3.74M16.06 6.3A7 7 0 0 1 5.05 14.75" fill="none" stroke="#666" stroke-width="2.3"/><g transform="translate(10.6 9.2) rotate(40)"><path d="M-3.3 -0.5H3.3V2Q3.3 4.6 0 4.6Q-3.3 4.6 -3.3 2Z" fill="#666"/><path d="M-1.8 -0.5V-4.5M1.8 -0.5V-4.5" stroke="#666" stroke-width="1.5"/></g></svg>
<svg width="20" height="20" style="left:1778px;top:6px"><circle cx="10" cy="10" r="7.8" fill="none" stroke="#666" stroke-width="1"/><circle cx="10" cy="10" r="6.5" fill="#666"/><path d="M9.5 5.5V10.5H13.5" stroke="#cbcbcb" stroke-width="1.3" fill="none"/></svg>
<svg width="20" height="20" style="left:1811px;top:6px"><path d="M9.3 2.3H10.7V3.8Q13.5 4.6 13.8 8Q14 12 16.5 14.2V15.4H3.5V14.2Q6 12 6.2 8Q6.5 4.6 9.3 3.8Z" fill="#666"/><path d="M8.3 16.2H11.7L10 17.6Z" fill="#666"/><circle cx="14" cy="6.8" r="3" fill="#1a9ae6"/></svg>
<svg width="20" height="20" style="left:1844px;top:6px"><circle cx="10" cy="10" r="8" fill="#666"/><path d="M7.3 8Q7.3 5 10 5Q12.8 5 12.8 7.6Q12.8 9.2 11 10Q10 10.6 10 12" stroke="#cbcbcb" stroke-width="2" fill="none"/><circle cx="10" cy="14.6" r="1.2" fill="#cbcbcb"/></svg>
<svg width="26" height="26" style="left:1882px;top:3px"><defs><radialGradient id="av" cx="0.5" cy="0.35" r="0.7"><stop offset="0" stop-color="#b4c4dc"/><stop offset="1" stop-color="#8ca0bf"/></radialGradient><clipPath id="avc"><circle cx="13" cy="13" r="12"/></clipPath></defs><circle cx="13" cy="13" r="12" fill="url(#av)"/><g clip-path="url(#avc)" fill="#4f5b6c"><ellipse cx="13.5" cy="10" rx="5" ry="6.5"/><path d="M3 26Q4 17 13 16Q22 17 23 26Z"/></g></svg>
</div>
<div id="ribbon" class="a"><div class="a" style="left:0;top:81px;width:1920px;height:1px;background:#dcdcdc"></div></div>
<div id="rib2"><div class="a" style="left:20px;top:65px;width:109px;height:61px;border:1px solid #d6d6d6;border-radius:5px;background:#f2f2f2"></div><div class="t" style="left:158.7px;top:61.0px;font-size:12.0px;font-weight:400;color:#0696d7;transform:scaleX(0.660);transform-origin:0 0">ソリッド</div><div class="t" style="left:236.0px;top:61.0px;font-size:12.0px;font-weight:400;color:#333;transform:scaleX(0.657);transform-origin:0 0">サーフェス</div><div class="t" style="left:319.0px;top:61.0px;font-size:12.0px;font-weight:400;color:#333;transform:scaleX(0.646);transform-origin:0 0">メッシュ</div><div class="t" style="left:397.6px;top:61.0px;font-size:12.0px;font-weight:400;color:#333;transform:scaleX(0.642);transform-origin:0 0">フォーム</div><div class="t" style="left:475.0px;top:61.0px;font-size:12.0px;font-weight:400;color:#333;transform:scaleX(0.682);transform-origin:0 0">シート メタル</div><div class="t" style="left:573.0px;top:61.0px;font-size:12.0px;font-weight:400;color:#333;transform:scaleX(0.653);transform-origin:0 0">プラスチック</div><div class="t" style="left:666.0px;top:61.0px;font-size:12.0px;font-weight:400;color:#333;transform:scaleX(0.631);transform-origin:0 0">ユーティリティ</div><div class="t" style="left:229.6px;top:120.5px;font-size:12.0px;font-weight:400;color:#444;transform:scaleX(0.913);transform-origin:0 0">作成</div><svg width="7" height="5" style="left:253.5px;top:124px"><path d="M0 0H7L3.5 4.5Z" fill="#333"/></svg><div class="t" style="left:476.0px;top:120.5px;font-size:12.0px;font-weight:400;color:#444;transform:scaleX(0.958);transform-origin:0 0">修正</div><svg width="7" height="5" style="left:501px;top:124px"><path d="M0 0H7L3.5 4.5Z" fill="#333"/></svg><div class="t" style="left:650.3px;top:120.5px;font-size:12.0px;font-weight:400;color:#444;transform:scaleX(0.693);transform-origin:0 0">アセンブリ</div><svg width="7" height="5" style="left:693.9px;top:124px"><path d="M0 0H7L3.5 4.5Z" fill="#333"/></svg><div class="t" style="left:739.0px;top:120.5px;font-size:12.0px;font-weight:400;color:#444;transform:scaleX(0.658);transform-origin:0 0">コンフィギュレーション</div><svg width="7" height="5" style="left:827.8px;top:124px"><path d="M0 0H7L3.5 4.5Z" fill="#333"/></svg><div class="t" style="left:863.9px;top:120.5px;font-size:12.0px;font-weight:400;color:#444;transform:scaleX(0.942);transform-origin:0 0">構築</div><svg width="7" height="5" style="left:888.5px;top:124px"><path d="M0 0H7L3.5 4.5Z" fill="#333"/></svg><div class="t" style="left:922.5px;top:120.5px;font-size:12.0px;font-weight:400;color:#444;transform:scaleX(0.979);transform-origin:0 0">検査</div><svg width="7" height="5" style="left:948px;top:124px"><path d="M0 0H7L3.5 4.5Z" fill="#333"/></svg><div class="t" style="left:998.6px;top:120.5px;font-size:12.0px;font-weight:400;color:#444;transform:scaleX(0.883);transform-origin:0 0">挿入</div><svg width="7" height="5" style="left:1021.8px;top:124px"><path d="M0 0H7L3.5 4.5Z" fill="#333"/></svg><div class="t" style="left:1078.0px;top:120.5px;font-size:12.0px;font-weight:400;color:#444;transform:scaleX(0.917);transform-origin:0 0">選択</div><svg width="7" height="5" style="left:1102px;top:124px"><path d="M0 0H7L3.5 4.5Z" fill="#333"/></svg><div class="t" style="left:53.0px;top:89.5px;font-size:12.0px;font-weight:400;color:#333;transform:scaleX(0.729);transform-origin:0 0">デザイン</div><svg width="7" height="5" style="left:92px;top:93.5px"><path d="M0 0H7L3.5 4.5Z" fill="#333"/></svg><svg width="34" height="34" style="left:144px;top:81px" viewBox="0 0 34 34"><rect x="2.5" y="2.5" width="27" height="27" fill="none" stroke="#555" stroke-width="1" stroke-dasharray="3 2"/>
<rect x="1" y="1" width="3" height="3" fill="#555"/><rect x="28" y="1" width="3" height="3" fill="#555"/><rect x="1" y="28" width="3" height="3" fill="#555"/>
<path d="M8 8V21M8 8H22" stroke="#555" stroke-width="1" stroke-dasharray="2 2" fill="none"/><rect x="6.5" y="6.5" width="3" height="3" fill="#555"/><rect x="20.5" y="6.5" width="3" height="3" fill="#555"/><rect x="6.5" y="20" width="3" height="3" fill="#555"/>
<path d="M9 21Q20 19 22 8" stroke="#555" stroke-width="1.2" fill="none"/>
<path d="M23 18H27V23H32V27H27V32H23V27H18V23H23Z" fill="#22a33a"/></svg><svg width="34" height="34" style="left:187px;top:81px" viewBox="0 0 34 34"><path d="M2 27L6 23H26V27L22 31H2Z" fill="#cfcfcf"/><path d="M2 27H22V31H2Z" fill="#c4c4c4"/>
<path d="M2 6L6 2H26L22 6Z" fill="#8dcdf8"/><path d="M2 6H22V27H2Z" fill="#63afe9"/><path d="M22 6L26 2V23L22 27Z" fill="#3e8ed0"/>
<path d="M2 6L6 2H26V23L22 27H2Z" fill="none" stroke="#3a7fbf" stroke-width=".6"/>
<path d="M30 29V4M27.5 7.5L30 3L32.5 7.5" stroke="#222" stroke-width="1.2" fill="none"/></svg><svg width="36" height="34" style="left:229px;top:81px" viewBox="0 0 36 34"><path d="M31.7 8.8Q24 2 17.6 3.1Q10 3.5 4.2 7.6" fill="none" stroke="#222" stroke-width="1.1"/><path d="M2.3 9.2L3.2 4.6L6.6 7.9Z" fill="#222"/>
<path d="M2.1 14.6Q10 8.1 17.6 8.1Q26 8 33.1 13.5L26.9 18.6Q22 15.9 17.6 15.9Q12 15.9 7.8 19.3Z" fill="#8ccdf7"/>
<path d="M7.8 19.3Q12 15.9 17.6 15.9Q22 15.9 26.9 18.6V28.7Q22 26 17.6 26Q12 26 7.8 30.1Z" fill="#66aee5"/>
<path d="M2.1 14.6L7.8 19.3V30.1L2.1 24.7Z" fill="#4f97d4"/>
<path d="M28.4 20.9L33.8 15.9V25L28.4 30.4Z" fill="#fff" stroke="#333" stroke-width="1"/></svg><svg width="36" height="34" style="left:272px;top:81px" viewBox="0 0 36 34"><path d="M2.2 7.1L8.3 1.4H33.6V27.4L27.8 32.4H2.2Z" fill="#dcdcdc"/><path d="M2.2 7.1L8.3 1.4H33.6L27.8 7.1Z" fill="#f0f0f0"/><path d="M27.8 7.1L33.6 1.4V27.4L27.8 32.4Z" fill="#bdbdbd"/>
<path d="M2.2 7.1L8.3 1.4H33.6V27.4L27.8 32.4H2.2Z" fill="none" stroke="#555" stroke-width="1.1"/>
<circle cx="15.4" cy="19.3" r="8.2" fill="#f0f0f0" stroke="#555" stroke-width=".9"/><path d="M13.3 13A6.6 6.6 0 1 0 21.8 20.3A8 8 0 0 1 13.3 13Z" fill="#5aa8e4"/></svg><svg width="34" height="34" style="left:316px;top:81px" viewBox="0 0 34 34"><rect x="1.9" y="3.6" width="5.4" height="5.4" fill="#fff" stroke="#444" stroke-width="1"/><rect x="22.3" y="3.1" width="6.7" height="6.5" fill="#5aa8e4"/><rect x="1.4" y="24" width="6.5" height="6.7" fill="#5aa8e4"/><rect x="22.3" y="24" width="6.7" height="6.7" fill="#5aa8e4"/>
<path d="M9.1 6.5H20.6M4.5 11.2V22.6M9.1 27.4H20.6" stroke="#444" stroke-width="1.2"/></svg><svg width="34" height="34" style="left:371px;top:81px" viewBox="0 0 34 34"><path d="M1 7L4 2H12V31H1Z" fill="#dcdcdc" stroke="#555" stroke-width="1"/><path d="M7 7L11 2H19V27L16 31H7Z" fill="#62aee9"/><path d="M16 7L19 2V27L16 31Z" fill="#3e8ed0"/><path d="M7 7L11 2H19L16 7Z" fill="#8ccdf7"/>
<path d="M17 17H27M24 14L28 17L24 20" stroke="#222" stroke-width="1.3" fill="none"/></svg><svg width="34" height="34" style="left:413px;top:81px" viewBox="0 0 34 34"><path d="M2 9L8 2H20V31H2Z" fill="#dcdcdc"/><path d="M26 22L32 16V25L26 31Z" fill="#b8b8b8"/><path d="M2 9H16Q26 10 26 22V31H2Z" fill="#d6d6d6" stroke="#555" stroke-width="1"/><path d="M2 9L8 2H18" fill="none" stroke="#555" stroke-width="1"/>
<path d="M18 2Q31 3 32 16L26 22Q25 10 16 9Z" fill="#5aa8e4"/><path d="M32 16V25L26 31" fill="none" stroke="#555" stroke-width="1"/></svg><svg width="34" height="34" style="left:456px;top:81px" viewBox="0 0 34 34"><path d="M2 7L7 2H32V26L27 31H2Z" fill="#e6e6e6" stroke="#555" stroke-width="1"/><path d="M27 7L32 2V26L27 31Z" fill="#bdbdbd"/><path d="M2 7H27V31" fill="none" stroke="#666" stroke-width=".8"/>
<rect x="6" y="11" width="17" height="16" fill="#f6f6f6"/><path d="M6 11H12V21H23V27H6Z" fill="#3f8fd0"/><path d="M12 21H23V27H8Z" fill="#8ccdf7"/></svg><svg width="34" height="34" style="left:499px;top:81px" viewBox="0 0 34 34"><path d="M1.1 15.2H11.2V5.1H29V22.6H19.3V32.8H1.1Z" fill="#66aee5"/><path d="M1.1 15.2L5.1 11.2H11.2V15.2Z M11.2 5.1L15.2 1.1H32.7L29 5.1Z" fill="#8ccdf7"/><path d="M29 5.1L32.7 1.1V18.6L29 22.6Z M19.3 22.6H22.9V28.7L19.3 32.8Z" fill="#4594d2"/></svg><svg width="36" height="34" style="left:542px;top:81px" viewBox="0 0 36 34"><path d="M3.2 7.1L9 1.4H30.9L25.2 7.1Z" fill="#8ccdf7"/><path d="M3.2 7.1H25.2V16.9H3.2Z" fill="#66aee5"/><path d="M25.2 7.1L30.9 1.4V10.5L25.2 16.9Z" fill="#4594d2"/>
<path d="M0.9 18.2H25.5L32.9 10.5" fill="none" stroke="#fff" stroke-width="1.2"/><path d="M0.9 19.6H25.5L32.9 11.9" fill="none" stroke="#2a8ae0" stroke-width="1"/>
<path d="M3.2 22H25.5V31.7H3.2Z" fill="#dadada"/><path d="M25.5 22L30.9 17.9V26L25.5 31.7Z" fill="#bdbdbd"/><path d="M3.2 22V31.7H25.5L30.9 26V17.9" fill="none" stroke="#555" stroke-width="1"/></svg><svg width="34" height="34" style="left:585px;top:81px" viewBox="0 0 34 34"><path d="M17 2L22 8H18.5V15.5H26V12L32 17L26 22V18.5H18.5V26H22L17 32L12 26H15.5V18.5H8V22L2 17L8 12V15.5H15.5V8H12Z" fill="#2b2b2b"/></svg><svg width="34" height="34" style="left:639px;top:81px" viewBox="0 0 34 34"><path d="M1.1 20.9H13.3V32.3H1.1Z" fill="#dadada"/><path d="M13.3 20.9L16.9 17.4H28.7L25 20.9Z" fill="#f4f4f4"/><path d="M13.3 20.9H25V32.3H13.3Z" fill="#dadada"/><path d="M25 20.9L28.7 17.4V28.6L25 32.3Z" fill="#bcbcbc"/>
<path d="M1.1 20.9V32.3H25L28.7 28.6V17.4H16.9L13.3 20.9V32.3M1.1 20.9H13.3" fill="none" stroke="#555" stroke-width="1"/>
<path d="M1.1 9H13.3V20.9H1.1Z" fill="#66aee5"/><path d="M1.1 9L4.9 5.3H16.8L13.3 9Z" fill="#8ccdf7"/><path d="M13.3 9L16.8 5.3V17.4L13.3 20.9Z" fill="#4594d2"/>
<path d="M24.50 1.60L25.65 6.73L30.09 3.91L27.27 8.35L32.40 9.50L27.27 10.65L30.09 15.09L25.65 12.27L24.50 17.40L23.35 12.27L18.91 15.09L21.73 10.65L16.60 9.50L21.73 8.35L18.91 3.91L23.35 6.73Z" fill="#f5a300" stroke="#e08a00" stroke-width=".4"/></svg><svg width="34" height="34" style="left:684px;top:81px" viewBox="0 0 34 34"><path d="M1.2 10.5L8.4 3.6V24.2L1.2 29.5Z" fill="#d4d4d4" stroke="#555" stroke-width="1" stroke-linejoin="round"/><path d="M8.4 4.5Q8.4 3 11 3Q13.6 3 13.6 4.5V14Q13.6 15.3 11 15.3Q8.4 15.3 8.4 14Z" fill="#e2e2e2" stroke="#555" stroke-width="1"/><ellipse cx="11" cy="4.6" rx="1.6" ry=".8" fill="#888"/>
<path d="M10.5 16.3V20.7M19.4 9V14.6" stroke="#1e88e5" stroke-width="1.1"/>
<path d="M16.4 13.6Q16.4 12.3 19 12.3Q21.5 12.3 21.5 13.6V23.4Q21.5 24.5 19 24.5Q16.4 24.5 16.4 23.4Z" fill="#c4c4c4" stroke="#555" stroke-width="1"/><ellipse cx="19" cy="13.6" rx="1.6" ry=".8" fill="#f0f0f0"/>
<path d="M21.5 5.3L28.5 11.1V30.5L21.5 24.4Z" fill="#e6e6e6" stroke="#555" stroke-width="1" stroke-linejoin="round"/></svg><svg width="34" height="34" style="left:749px;top:81px" viewBox="0 0 34 34"><g opacity=".45"><path d="M1 9L7 3H20V31H1Z" fill="#f0f0f0" stroke="#bbb" stroke-width="1"/><circle cx="24" cy="8" r="6.5" fill="#7ab8ea"/><path d="M24 12V6M21.5 8L24 4.5L26.5 8" stroke="#fff" stroke-width="1.6" fill="none"/><path d="M19 22H31M19 28H31M24 20V24M27 26V30" stroke="#aaa" stroke-width="1.2"/></g></svg><svg width="34" height="34" style="left:792px;top:81px" viewBox="0 0 34 34"><g opacity=".45"><rect x="1" y="2" width="28" height="29" fill="#f0f0f0" stroke="#bbb" stroke-width="1"/><path d="M1 6H29M1 13H29M1 20H29M7 6V31M14 6V31M21 6V31" stroke="#bbb" stroke-width=".8"/><circle cx="24" cy="8" r="6.5" fill="#7ab8ea"/><path d="M24 12V6M21.5 8L24 4.5L26.5 8" stroke="#fff" stroke-width="1.6" fill="none"/><path d="M19 22H31M19 28H31M24 20V24M27 26V30" stroke="#aaa" stroke-width="1.2"/></g></svg><svg width="34" height="34" style="left:863px;top:81px" viewBox="0 0 34 34"><path d="M1 8L8 2V26L1 31Z" fill="#dedede" stroke="#555" stroke-width="1"/><path d="M1 8L8 2L14 2L8 8Z" fill="#fff" stroke="#555" stroke-width="1"/><path d="M8 8H1V31H8Z" fill="#e2e2e2" stroke="#555" stroke-width="1"/>
<path d="M8 8L16 2V26L8 31Z" fill="#5cc27a"/><path d="M21 10L29 2V24L21 31Z" fill="#e6956a"/></svg><svg width="34" height="34" style="left:923px;top:81px" viewBox="0 0 34 34"><path d="M1.5 4V15M28.5 4V15M2 9.5H28M2 9.5L6 7M2 9.5L6 12M28 9.5L24 7M28 9.5L24 12" stroke="#444" stroke-width="1" fill="none"/>
<rect x="1" y="17" width="29" height="7" fill="#f5a50a"/><path d="M4 17V19.5M7 17V19M10 17V19.5M13 17V19M16 17V19.5M19 17V19M22 17V19.5M25 17V19M28 17V19.5" stroke="#7a5200" stroke-width=".7"/></svg><svg width="36" height="34" style="left:977px;top:81px" viewBox="0 0 36 34"><path d="M6.5 13L14 5.5H31.5L24 13Z" fill="#f6f6f6"/><path d="M6.5 13H24V30.5H6.5Z" fill="#d9d9d9"/><path d="M24 13L31.5 5.5V23L24 30.5Z" fill="#b9b9b9"/><path d="M17 30.5H6.5V13L9 10.5M19 5.5H31.5V23" stroke="#555" stroke-width="1" fill="none"/>
<path d="M2.2 5.1H10.5V1.2L19.3 6.9L10.5 12.9V8.7H2.2Z" fill="#1f88e5"/>
<g transform="translate(25.8 25.9) rotate(-40)" fill="none" stroke="#1e1e1e" stroke-width="2"><rect x="-8.5" y="-3.3" width="9.5" height="6.6" rx="3.3"/><rect x="-1" y="-3.3" width="9.5" height="6.6" rx="3.3"/></g></svg><svg width="34" height="34" style="left:1022px;top:81px" viewBox="0 0 34 34"><rect x="1.5" y="2.5" width="28" height="28" fill="#8ccdf8" stroke="#3c8fcc" stroke-width="1"/><circle cx="24" cy="10.2" r="3" fill="#fdfbd0"/><path d="M1.5 21.4Q7 14 11.6 15.4Q15 16.5 21.7 25.3Q24 22 26.4 21.1Q28 21 29.5 23V30.5H1.5Z" fill="#3c8fcc"/></svg><div class="a" style="left:1075px;top:79px;width:38px;height:38px;background:#0a96d8"></div><svg width="38" height="38" style="left:1075px;top:79px" viewBox="0 0 38 38"><rect x="3" y="3.3" width="28" height="21" fill="none" stroke="#8fe08f" stroke-width="1" stroke-dasharray="3 2"/>
<path d="M24 17V35L28.3 31L31.3 37.5L34 36.2L31.2 30H36.5Z" fill="#fff" stroke="#555" stroke-width=".4"/></svg><div class="a" style="left:359px;top:82px;width:1px;height:50px;background:#d9d9d9"></div><div class="a" style="left:628px;top:82px;width:1px;height:50px;background:#d9d9d9"></div><div class="a" style="left:725px;top:82px;width:1px;height:50px;background:#d9d9d9"></div><div class="a" style="left:849px;top:82px;width:1px;height:50px;background:#d9d9d9"></div><div class="a" style="left:908px;top:82px;width:1px;height:50px;background:#d9d9d9"></div><div class="a" style="left:967px;top:82px;width:1px;height:50px;background:#d9d9d9"></div><div class="a" style="left:1064px;top:82px;width:1px;height:50px;background:#d9d9d9"></div><div class="a" style="left:147px;top:76px;width:56px;height:3px;background:#0696d7"></div></div>
<div class="a" style="left:12px;top:144px;width:300px;height:25px;background:#f1f1f1;border:1px solid #cfcfcf"></div><svg width="12" height="8" style="left:17px;top:153px"><path d="M0 3.5L5 0V7Z M5 3.5L10 0V7Z" fill="#333"/></svg><div class="t" style="left:36.7px;top:151.0px;font-size:12.0px;font-weight:400;color:#666;transform:scaleX(0.694);transform-origin:0 0">ブラウザ</div><svg width="11" height="11" style="left:290px;top:151.5px"><circle cx="5.5" cy="5.5" r="5" fill="#2b2b2b"/><path d="M2.5 5.5H8.5" stroke="#fff" stroke-width="1.6"/></svg><div class="a" style="left:48px;top:174px;width:169px;height:20px;background:#f1f1f1"></div><div class="a" style="left:66px;top:198px;width:118.0px;height:20px;background:#f1f1f1"></div><div class="a" style="left:66px;top:222px;width:125.7px;height:20px;background:#f1f1f1"></div><div class="a" style="left:66px;top:246px;width:91.0px;height:20px;background:#f1f1f1"></div><div class="a" style="left:66px;top:270px;width:94.2px;height:20px;background:#f1f1f1"></div><div class="a" style="left:66px;top:294px;width:138.3px;height:20px;background:#f1f1f1"></div><div class="a" style="left:66px;top:318px;width:93.8px;height:20px;background:#f1f1f1"></div><div class="a" style="left:66px;top:342px;width:93.8px;height:20px;background:#f1f1f1"></div><div class="a" style="left:66px;top:366px;width:93.8px;height:20px;background:#f1f1f1"></div><svg width="12" height="12" style="left:29px;top:178px"><defs><linearGradient id="tri" x1="0" y1="0" x2="1" y2="1"><stop offset="0" stop-color="#ddd"/><stop offset="1" stop-color="#333"/></linearGradient></defs><path d="M11 0.5V11H0.5Z" fill="url(#tri)" stroke="#222" stroke-width="1"/></svg><svg width="16" height="11" style="left:51px;top:179px"><path d="M0.5 5.5Q8 -2 15.5 5.5Q8 13 0.5 5.5Z" fill="#9a9a9a" stroke="#9a9a9a" stroke-width="1"/><circle cx="8" cy="5.5" r="2.8" fill="#f1f1f1"/><circle cx="8" cy="5.5" r="1.5" fill="#9a9a9a"/></svg><div class="a" style="left:73px;top:176px;width:122px;height:16px;background:#999"></div><svg width="17" height="17" style="left:75px;top:176px"><path d="M1 5L5 1H15V12L11 16H1Z" fill="#e4e6ea" stroke="#222" stroke-width="1"/><path d="M11 5L15 1V12L11 16Z" fill="#fff" stroke="#222" stroke-width="1"/><path d="M1 5H11" stroke="#222" stroke-width="1"/></svg><div class="t" style="left:105.7px;top:178.5px;font-size:12.0px;font-weight:400;color:#fff;transform:scaleX(0.672);transform-origin:0 0">ティッシュケース</div><div class="t" style="left:173.6px;top:178.5px;font-size:12.0px;font-weight:700;color:#fff;transform:scaleX(0.913);transform-origin:0 0">v1</div><svg width="14" height="14" style="left:198.5px;top:177.5px"><circle cx="7" cy="7" r="5.8" fill="#fff" stroke="#222" stroke-width="1.2"/><circle cx="7" cy="7" r="2.4" fill="#222"/></svg><svg width="11" height="14" style="left:47.5px;top:201px"><path d="M1 1L9.5 7L1 13Z" fill="#f4f4f4" stroke="#222" stroke-width="1.3" stroke-linejoin="round"/></svg><svg width="15" height="15" style="left:68px;top:200.5px"><g transform="translate(7.5 7.5)" fill="#8a8a8a"><circle r="5"/><g id="gt"><rect x="-1.6" y="-7.2" width="3.2" height="3.5"/></g><use href="#gt" transform="rotate(45)"/><use href="#gt" transform="rotate(90)"/><use href="#gt" transform="rotate(135)"/><use href="#gt" transform="rotate(180)"/><use href="#gt" transform="rotate(225)"/><use href="#gt" transform="rotate(270)"/><use href="#gt" transform="rotate(315)"/></g><circle cx="7.5" cy="7.5" r="2" fill="#f1f1f1"/></svg><div class="t" style="left:94.6px;top:203.0px;font-size:12.0px;font-weight:400;color:#444;transform:scaleX(0.721);transform-origin:0 0">ドキュメントの設定</div><svg width="11" height="14" style="left:47.5px;top:225px"><path d="M1 1L9.5 7L1 13Z" fill="#f4f4f4" stroke="#222" stroke-width="1.3" stroke-linejoin="round"/></svg><svg width="16" height="13" style="left:69px;top:226px"><path d="M0 1H6L7 2.5H16V13H0Z" fill="#9a9a9a"/><path d="M0 3.5H16" stroke="#f1f1f1" stroke-width=".8"/></svg><div class="t" style="left:99.7px;top:227.0px;font-size:12.0px;font-weight:400;color:#444;transform:scaleX(0.756);transform-origin:0 0">名前の付いたビュー</div><svg width="11" height="14" style="left:47.5px;top:249px"><path d="M1 1L9.5 7L1 13Z" fill="#f4f4f4" stroke="#222" stroke-width="1.3" stroke-linejoin="round"/></svg><svg width="16" height="11" style="left:69px;top:250.5px"><path d="M0.5 5.5Q8 -2 15.5 5.5Q8 13 0.5 5.5Z" fill="none" stroke="#9a9a9a" stroke-width="1"/><circle cx="8" cy="5.5" r="2.5" fill="none" stroke="#9a9a9a" stroke-width="1"/><path d="M3 0.5L13 10.5" stroke="#9a9a9a" stroke-width="1"/></svg><svg width="16" height="13" style="left:94px;top:250px"><path d="M0 1H6L7 2.5H16V13H0Z" fill="#9a9a9a"/><path d="M0 3.5H16" stroke="#f1f1f1" stroke-width=".8"/></svg><div class="t" style="left:123.5px;top:251.0px;font-size:12.0px;font-weight:400;color:#444;transform:scaleX(0.925);transform-origin:0 0">原点</div><svg width="11" height="14" style="left:47.5px;top:273px"><path d="M1 1L9.5 7L1 13Z" fill="#f4f4f4" stroke="#222" stroke-width="1.3" stroke-linejoin="round"/></svg><svg width="16" height="11" style="left:69px;top:274.5px"><path d="M0.5 5.5Q8 -2 15.5 5.5Q8 13 0.5 5.5Z" fill="#9a9a9a" stroke="#9a9a9a" stroke-width="1"/><circle cx="8" cy="5.5" r="2.8" fill="#f1f1f1"/><circle cx="8" cy="5.5" r="1.5" fill="#9a9a9a"/></svg><svg width="16" height="13" style="left:94px;top:274px"><path d="M0 1H6L7 2.5H16V13H0Z" fill="#9a9a9a"/><path d="M0 3.5H16" stroke="#f1f1f1" stroke-width=".8"/></svg><div class="t" style="left:123.5px;top:275.0px;font-size:12.0px;font-weight:400;color:#444;transform:scaleX(0.681);transform-origin:0 0">ボディ</div><svg width="11" height="14" style="left:47.5px;top:297px"><path d="M1 1L9.5 7L1 13Z" fill="#f4f4f4" stroke="#222" stroke-width="1.3" stroke-linejoin="round"/></svg><svg width="16" height="11" style="left:69px;top:298.5px"><path d="M0.5 5.5Q8 -2 15.5 5.5Q8 13 0.5 5.5Z" fill="#9a9a9a" stroke="#9a9a9a" stroke-width="1"/><circle cx="8" cy="5.5" r="2.8" fill="#f1f1f1"/><circle cx="8" cy="5.5" r="1.5" fill="#9a9a9a"/></svg><svg width="16" height="13" style="left:94px;top:298px"><path d="M0 1H6L7 2.5H16V13H0Z" fill="#9a9a9a"/><path d="M0 3.5H16" stroke="#f1f1f1" stroke-width=".8"/></svg><div class="t" style="left:123.5px;top:299.0px;font-size:12.0px;font-weight:400;color:#444;transform:scaleX(0.669);transform-origin:0 0">コンストラクション</div><svg width="17" height="17" style="left:68.5px;top:320px"><path d="M1 12L3 10H12V13L10 15H1Z" fill="#c8c8c8"/><path d="M1 4L4 1H12L10 4Z" fill="#8ccdf7"/><path d="M1 4H10V13H1Z" fill="#5aa8e4"/><path d="M10 4L12 1V10L10 13Z" fill="#3f8fd0"/><path d="M15 14V2M13.5 4L15 1.5L16.5 4" stroke="#222" stroke-width="1" fill="none"/></svg><div class="t" style="left:99.7px;top:323.0px;font-size:12.0px;font-weight:400;color:#444;transform:scaleX(0.704);transform-origin:0 0">押し出し</div><div class="t" style="left:135.2px;top:323.0px;font-size:12.0px;font-weight:400;color:#444;transform:scaleX(1.003);transform-origin:0 0">17</div><svg width="17" height="17" style="left:68.5px;top:344px"><path d="M1 12L3 10H12V13L10 15H1Z" fill="#c8c8c8"/><path d="M1 4L4 1H12L10 4Z" fill="#8ccdf7"/><path d="M1 4H10V13H1Z" fill="#5aa8e4"/><path d="M10 4L12 1V10L10 13Z" fill="#3f8fd0"/><path d="M15 14V2M13.5 4L15 1.5L16.5 4" stroke="#222" stroke-width="1" fill="none"/></svg><div class="t" style="left:99.7px;top:347.0px;font-size:12.0px;font-weight:400;color:#444;transform:scaleX(0.704);transform-origin:0 0">押し出し</div><div class="t" style="left:135.2px;top:347.0px;font-size:12.0px;font-weight:400;color:#444;transform:scaleX(1.003);transform-origin:0 0">18</div><svg width="17" height="17" style="left:68.5px;top:368px"><path d="M1 12L3 10H12V13L10 15H1Z" fill="#c8c8c8"/><path d="M1 4L4 1H12L10 4Z" fill="#8ccdf7"/><path d="M1 4H10V13H1Z" fill="#5aa8e4"/><path d="M10 4L12 1V10L10 13Z" fill="#3f8fd0"/><path d="M15 14V2M13.5 4L15 1.5L16.5 4" stroke="#222" stroke-width="1" fill="none"/></svg><div class="t" style="left:99.7px;top:371.0px;font-size:12.0px;font-weight:400;color:#444;transform:scaleX(0.704);transform-origin:0 0">押し出し</div><div class="t" style="left:135.2px;top:371.0px;font-size:12.0px;font-weight:400;color:#444;transform:scaleX(1.003);transform-origin:0 0">19</div><div class="a" style="left:12px;top:1131px;width:300px;height:25px;background:#f1f1f1;border:1px solid #cfcfcf"></div><div class="t" style="left:37.3px;top:1138.0px;font-size:12.0px;font-weight:400;color:#666;transform:scaleX(0.650);transform-origin:0 0">コメント</div><svg width="11" height="11" style="left:290px;top:1138.5px"><circle cx="5.5" cy="5.5" r="5" fill="#2b2b2b"/><path d="M2.5 5.5H8.5M5.5 2.5V8.5" stroke="#fff" stroke-width="1.6"/></svg><div class="a" style="left:850px;top:1130px;width:237px;height:24px;background:#f0f0f0"></div><svg width="240" height="24" style="left:850px;top:1130px">
<path d="M4 12.5Q4 9.5 11 9M15.5 9Q20 9.8 20 12.5Q20 15.5 11 16" stroke="#333" stroke-width="1.3" fill="none"/><path d="M10.3 3.5L13 7H11.7V19H9V7H7.6Z" fill="#fff" stroke="#333" stroke-width=".9"/><path d="M5 16L8.5 13.5V18.5Z" fill="#222"/>
<path d="M24 11H30L27 14.5Z" fill="#222"/>
<path d="M35.5 8H51V19.5H35.5Z" fill="#fff" stroke="#555" stroke-width="1.1"/><rect x="38.5" y="12" width="9.5" height="4" fill="#9aaac4" stroke="#555" stroke-width=".8"/><path d="M37 7.5L39 4.5L44 6.5L50 4.5V7.5Z" fill="#999" stroke="#555" stroke-width=".6"/>
<path d="M68 19.5Q64 17 62.5 13.5Q62 12 63.5 12Q65 12.5 66 14.5V6.5Q66 5 67.2 5Q68.4 5 68.4 6.5V11.5V4.5Q68.4 3 69.6 3Q70.8 3 70.8 4.5V11.5V5Q70.8 3.6 72 3.6Q73.2 3.6 73.2 5V11.5V6.5Q73.2 5.3 74.3 5.3Q75.5 5.3 75.5 6.5V14Q75.5 17.5 73.5 19.5Z" fill="#f8f8f8" stroke="#444" stroke-width=".9"/>
<circle cx="93.3" cy="11.5" r="4.6" fill="#e8f2f6" stroke="#444" stroke-width="1.2"/><path d="M96.6 14.8L100 18.3" stroke="#333" stroke-width="2.4" stroke-linecap="round"/><path d="M99.8 7.3H104.3M102 5.1V9.5M99.8 10.8H104.3" stroke="#333" stroke-width=".9"/>
<rect x="114" y="4.4" width="15.5" height="15" fill="none" stroke="#555" stroke-width=".9" stroke-dasharray="1.6 1.4"/><circle cx="120.8" cy="10.9" r="5.8" fill="#e4eeee" stroke="#333" stroke-width="1.3"/><path d="M125 15.2L128.6 18.6" stroke="#333" stroke-width="2.6" stroke-linecap="round"/>
<path d="M135.5 11H141.5L138.5 14.5Z" fill="#222"/>
<rect x="147.3" y="4.4" width="15" height="12" rx="1" fill="#f2f2f2" stroke="#444" stroke-width="1"/><rect x="149.4" y="6.2" width="10.8" height="8" fill="#9ab8e2" stroke="#3a5a9a" stroke-width=".6"/><path d="M152 16.6V18.8H158.3V16.6" fill="#ddd" stroke="#555" stroke-width=".7"/>
<path d="M165 11H171L168 14.5Z" fill="#222"/>
<rect x="178" y="3.9" width="15.9" height="15.9" fill="#dcdcdc" stroke="#777" stroke-width=".8"/><rect x="178.6" y="4.5" width="2.5" height="2.5" fill="#8c8c8c"/><rect x="181.7" y="4.5" width="2.5" height="2.5" fill="#8c8c8c"/><rect x="184.8" y="4.5" width="2.5" height="2.5" fill="#8c8c8c"/><rect x="187.9" y="4.5" width="2.5" height="2.5" fill="#8c8c8c"/><rect x="191.0" y="4.5" width="2.5" height="2.5" fill="#8c8c8c"/><rect x="178.6" y="7.6" width="2.5" height="2.5" fill="#8c8c8c"/><rect x="181.7" y="7.6" width="2.5" height="2.5" fill="#8c8c8c"/><rect x="184.8" y="7.6" width="2.5" height="2.5" fill="#8c8c8c"/><rect x="187.9" y="7.6" width="2.5" height="2.5" fill="#8c8c8c"/><rect x="191.0" y="7.6" width="2.5" height="2.5" fill="#8c8c8c"/><rect x="178.6" y="10.7" width="2.5" height="2.5" fill="#8c8c8c"/><rect x="181.7" y="10.7" width="2.5" height="2.5" fill="#8c8c8c"/><rect x="184.8" y="10.7" width="2.5" height="2.5" fill="#8c8c8c"/><rect x="187.9" y="10.7" width="2.5" height="2.5" fill="#8c8c8c"/><rect x="191.0" y="10.7" width="2.5" height="2.5" fill="#8c8c8c"/><rect x="178.6" y="13.8" width="2.5" height="2.5" fill="#8c8c8c"/><rect x="181.7" y="13.8" width="2.5" height="2.5" fill="#8c8c8c"/><rect x="184.8" y="13.8" width="2.5" height="2.5" fill="#8c8c8c"/><rect x="187.9" y="13.8" width="2.5" height="2.5" fill="#8c8c8c"/><rect x="191.0" y="13.8" width="2.5" height="2.5" fill="#8c8c8c"/><rect x="178.6" y="16.9" width="2.5" height="2.5" fill="#8c8c8c"/><rect x="181.7" y="16.9" width="2.5" height="2.5" fill="#8c8c8c"/><rect x="184.8" y="16.9" width="2.5" height="2.5" fill="#8c8c8c"/><rect x="187.9" y="16.9" width="2.5" height="2.5" fill="#8c8c8c"/><rect x="191.0" y="16.9" width="2.5" height="2.5" fill="#8c8c8c"/>
<path d="M196 11H202L199 14.5Z" fill="#222"/>
<rect x="209.3" y="5.4" width="14.2" height="13" fill="#3a5a9a"/><rect x="210.6" y="6.7" width="5.2" height="4.6" fill="#a9c2e6" stroke="#4a6aaa" stroke-width=".5"/><rect x="217" y="6.7" width="5.2" height="4.6" fill="#a9c2e6" stroke="#4a6aaa" stroke-width=".5"/><rect x="210.6" y="12.5" width="5.2" height="4.6" fill="#a9c2e6" stroke="#4a6aaa" stroke-width=".5"/><rect x="217" y="12.5" width="5.2" height="4.6" fill="#a9c2e6" stroke="#4a6aaa" stroke-width=".5"/>
<path d="M227 11H233L230 14.5Z" fill="#222"/>
</svg><svg width="100" height="100" style="left:1815px;top:145px"><g transform="translate(-1815,-145)">
<defs><linearGradient id="cT" x1="0" y1="0" x2="0" y2="1"><stop offset="0" stop-color="#f3f3f3"/><stop offset="1" stop-color="#e2e2e2"/></linearGradient>
<linearGradient id="cL" x1="0" y1="0" x2="1" y2="1"><stop offset="0" stop-color="#eeeeee"/><stop offset="1" stop-color="#d9d9d9"/></linearGradient>
<linearGradient id="cR" x1="0" y1="0" x2="1" y2="1"><stop offset="0" stop-color="#e6e6e6"/><stop offset="1" stop-color="#dadada"/></linearGradient>
<radialGradient id="cS"><stop offset="0" stop-color="#000" stop-opacity=".18"/><stop offset="1" stop-color="#000" stop-opacity="0"/></radialGradient></defs>
<ellipse cx="1866" cy="238" rx="38" ry="12" fill="url(#cS)"/>
<path d="M1864.2 167.7L1899.1 184.2L1864.2 202.1L1829.8 184.2Z" fill="url(#cT)"/>
<path d="M1829.8 184.2L1864.2 202.1L1864.2 243.7L1833.4 222.2Z" fill="url(#cL)"/>
<path d="M1864.2 202.1L1899.1 184.2L1895.5 222.2L1864.2 243.7Z" fill="url(#cR)"/>
<path d="M1864.2 167.7L1899.1 184.2L1895.5 222.2L1864.2 243.7L1833.4 222.2L1829.8 184.2Z M1829.8 184.2L1864.2 202.1L1899.1 184.2 M1864.2 202.1V243.7" fill="none" stroke="#6a6a6a" stroke-width="1"/>
<path d="M1864.5 168V160" stroke="#22dd22" stroke-width="1.6"/>
<path d="M1833.4 222.2L1827 225.5" stroke="#5555ee" stroke-width="1.6"/>
<path d="M1895.5 222.2L1902 225.5" stroke="#ee5555" stroke-width="1.6"/>
<text x="1864.5" y="158.5" font-size="11" fill="#22dd22" text-anchor="middle" font-family="Liberation Sans">Y</text>
<text x="1821.5" y="233.5" font-size="11" fill="#5a5aee" text-anchor="middle" font-family="Liberation Sans">Z</text>
<text x="1907.5" y="233.5" font-size="11" fill="#ee6666" text-anchor="middle" font-family="Liberation Sans">X</text>
<g fill="#7d828a" font-size="62" text-anchor="middle" style="-webkit-text-stroke:0">
<text transform="matrix(0.344 0.179 -0.344 0.165 1864.2 167.7)" x="55" y="76">上</text>
<text transform="matrix(0.344 0.179 0.036 0.38 1829.8 184.2)" x="50" y="74">前</text>
<text transform="matrix(0.349 -0.179 0 0.416 1864.2 202.1)" x="50" y="74">右</text>
</g>
</g></svg><div class="a" style="left:0;top:0;width:8px;height:87px;background:#dfe4ec"></div>
<div class="a" style="left:0;top:41px;width:8px;height:46px;background:#fff;border-radius:0 7px 0 0"></div>
<div class="a" style="left:-5px;top:49px;width:9px;height:20px;background:#c9d7f2;border-radius:50%"></div>
<div class="a" style="left:0;top:86.5px;width:8px;height:1px;background:#d0d0d0"></div>
<div class="a" style="left:0;top:87px;width:8px;height:1073px;background:#fff"></div>
<svg width="8" height="8" style="left:0;top:91px"><path d="M0 0L5 6H0Z" fill="#444"/></svg>
<div class="a" style="left:0;top:105px;width:5px;height:353px;background:#555;border-radius:0 0 3px 0"></div>
<svg width="8" height="8" style="left:0;top:1027px"><path d="M0 0H5L0 6Z" fill="#444"/></svg>
<div class="a" style="left:0;top:1040px;width:8px;height:40px;background:#1b1b1b"></div>
<div class="a" style="left:0;top:1080px;width:8px;height:88px;background:#000"></div>
<div class="t" style="left:-4px;top:1055px;font-size:11px;color:#ddd">5</div>
<div class="a" style="left:0;top:1160px;width:1928px;height:8px;background:#121212"></div>
<div class="a" style="left:56px;top:1160px;width:288px;height:8px;background:#f0f0f0;border-top:1px solid #c4c4c4"></div>
<div class="a" style="left:934px;top:1160px;width:48px;height:8px;background:#333"></div>
<div class="t" style="left:1826px;top:1165px;font-size:11px;color:#eee">22:34</div>
<div class="a" style="left:1926px;top:1160px;width:1px;height:8px;background:#555"></div>
</body>
</html>
